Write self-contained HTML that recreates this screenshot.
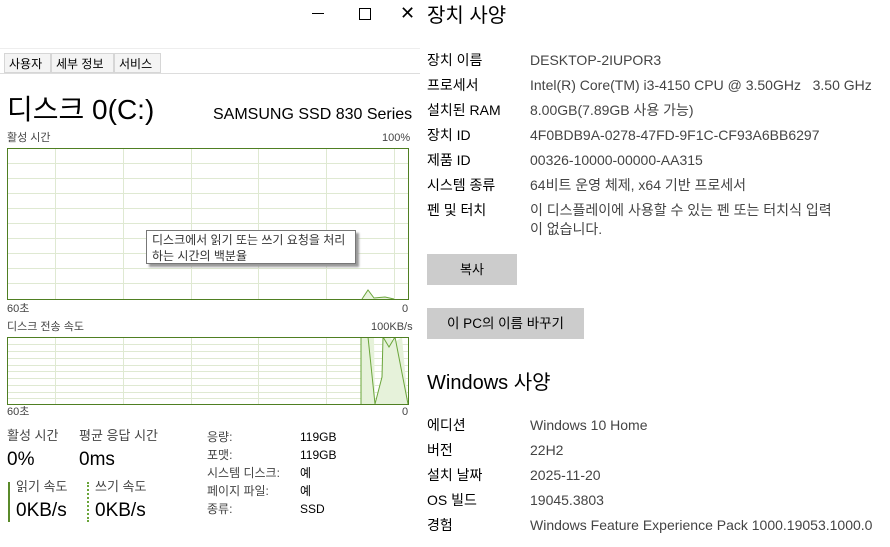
<!DOCTYPE html>
<html><head><meta charset="utf-8"><style>
body{margin:0;width:890px;height:547px;background:#fff;position:relative;overflow:hidden;font-family:"Liberation Sans","Noto Sans CJK KR",sans-serif;color:#000}
.a{position:absolute;white-space:nowrap}
.l{font-size:14px;line-height:18px}
.v{font-size:14px;line-height:18px;color:#444}
.s{font-size:11px;line-height:14px;color:#444}
.tab{position:absolute;top:53px;height:20px;border:1px solid #d6d6d6;background:#f4f4f4;font-size:12px;line-height:20px;padding:0 4px;box-sizing:border-box}
</style></head><body>
<div class="a" style="left:312px;top:13px;width:12px;height:1px;background:#000"></div>
<div class="a" style="left:359px;top:8px;width:10px;height:10px;border:1px solid #000"></div>
<div class="a" style="left:400px;top:1px;font-size:18px;line-height:24px">✕</div>
<div class="a" style="left:0;top:48px;width:420px;height:1px;background:#eee"></div>
<div class="a" style="left:0;top:73px;width:420px;height:1px;background:#ddd"></div>
<div class="tab" style="left:4px;width:47px">사용자</div>
<div class="tab" style="left:51px;width:63px">세부 정보</div>
<div class="tab" style="left:114px;width:47px">서비스</div>
<div class="a" style="left:7px;top:93px;font-size:28px;line-height:34px">디스크 0(C:)</div>
<div class="a" style="left:213px;top:104px;font-size:16px;line-height:22px">SAMSUNG SSD 830 Series</div>
<div class="a s" style="left:7px;top:131px">활성 시간</div>
<div class="a s" style="left:382px;top:131px">100%</div>
<svg class="a" style="left:7px;top:148px" width="402" height="152">
<g stroke="#dfe9d2" stroke-width="1">
<line x1="48.5" y1="0" x2="48.5" y2="152"/><line x1="116.5" y1="0" x2="116.5" y2="152"/><line x1="184.5" y1="0" x2="184.5" y2="152"/><line x1="251.5" y1="0" x2="251.5" y2="152"/><line x1="319.5" y1="0" x2="319.5" y2="152"/><line x1="387.5" y1="0" x2="387.5" y2="152"/>
<line x1="0" y1="15.5" x2="402" y2="15.5"/><line x1="0" y1="30.5" x2="402" y2="30.5"/><line x1="0" y1="45.5" x2="402" y2="45.5"/><line x1="0" y1="60.5" x2="402" y2="60.5"/><line x1="0" y1="75.5" x2="402" y2="75.5"/><line x1="0" y1="90.5" x2="402" y2="90.5"/><line x1="0" y1="105.5" x2="402" y2="105.5"/><line x1="0" y1="120.5" x2="402" y2="120.5"/><line x1="0" y1="135.5" x2="402" y2="135.5"/>
</g>
<polyline points="355,151 361,142 367,150 378,149 387,151" fill="#eaf4df" stroke="#6aa53a"/>
<rect x="0.5" y="0.5" width="401" height="151" fill="none" stroke="#4f7f22"/>
</svg>
<div class="a" style="left:146px;top:230px;width:210px;height:34px;border:1px solid #777;background:#fff;box-shadow:3px 3px 2px #999;font-size:12px;line-height:16px;padding:1px 5px;box-sizing:border-box;color:#333;white-space:normal">디스크에서 읽기 또는 쓰기 요청을 처리하는 시간의 백분율</div>
<div class="a s" style="left:7px;top:302px">60초</div>
<div class="a s" style="left:402px;top:302px">0</div>
<div class="a s" style="left:7px;top:320px">디스크 전송 속도</div>
<div class="a s" style="left:371px;top:320px">100KB/s</div>
<svg class="a" style="left:7px;top:337px" width="402" height="68">
<g stroke="#dfe9d2" stroke-width="1">
<line x1="48.5" y1="0" x2="48.5" y2="68"/><line x1="116.5" y1="0" x2="116.5" y2="68"/><line x1="184.5" y1="0" x2="184.5" y2="68"/><line x1="251.5" y1="0" x2="251.5" y2="68"/><line x1="319.5" y1="0" x2="319.5" y2="68"/><line x1="387.5" y1="0" x2="387.5" y2="68"/>
<line x1="0" y1="7.5" x2="402" y2="7.5"/><line x1="0" y1="14.5" x2="402" y2="14.5"/><line x1="0" y1="21.5" x2="402" y2="21.5"/><line x1="0" y1="28.5" x2="402" y2="28.5"/><line x1="0" y1="34.5" x2="402" y2="34.5"/><line x1="0" y1="41.5" x2="402" y2="41.5"/><line x1="0" y1="48.5" x2="402" y2="48.5"/><line x1="0" y1="55.5" x2="402" y2="55.5"/><line x1="0" y1="61.5" x2="402" y2="61.5"/>
</g>
<polygon points="354,67 354,0 367,0 368,67 375,40 376,0 382,0 388,5 395,0 401,67" fill="#e6f2da"/>
<polyline points="354,67 354,0 361,0 368,67 375,40 376,0 382,10 388,0 401,67" fill="none" stroke="#6aa53a"/>
<rect x="0.5" y="0.5" width="401" height="67" fill="none" stroke="#4f7f22"/>
</svg>
<div class="a s" style="left:7px;top:405px">60초</div>
<div class="a s" style="left:402px;top:405px">0</div>
<div class="a" style="left:7px;top:428px;font-size:13px;line-height:16px;color:#444">활성 시간</div>
<div class="a" style="left:79px;top:428px;font-size:13px;line-height:16px;color:#444">평균 응답 시간</div>
<div class="a" style="left:7px;top:449px;font-size:19px;line-height:22px">0%</div>
<div class="a" style="left:79px;top:449px;font-size:19px;line-height:22px">0ms</div>
<div class="a" style="left:8px;top:482px;width:2px;height:40px;background:#5a8a2a"></div>
<div class="a" style="left:87px;top:482px;width:0;height:40px;border-left:2px dotted #6aa53a"></div>
<div class="a" style="left:16px;top:479px;font-size:13px;line-height:16px;color:#444">읽기 속도</div>
<div class="a" style="left:95px;top:479px;font-size:13px;line-height:16px;color:#444">쓰기 속도</div>
<div class="a" style="left:16px;top:500px;font-size:19px;line-height:22px">0KB/s</div>
<div class="a" style="left:95px;top:500px;font-size:19px;line-height:22px">0KB/s</div>
<div class="a" style="left:207px;top:428px;font-size:12px;line-height:18px;color:#444">응량:<br>포맷:<br>시스템 디스크:<br>페이지 파일:<br>종류:</div>
<div class="a" style="left:300px;top:428px;font-size:12px;line-height:18px;color:#000">119GB<br>119GB<br>예<br>예<br>SSD</div>

<div class="a" style="left:427px;top:3px;font-size:20px;line-height:26px">장치 사양</div>
<div class="a l" style="left:427px;top:48px;line-height:25px">장치 이름<br>프로세서<br>설치된 RAM<br>장치 ID<br>제품 ID<br>시스템 종류<br>펜 및 터치</div>
<div class="a v" style="left:530px;top:48px;line-height:25px">DESKTOP-2IUPOR3<br>Intel(R) Core(TM) i3-4150 CPU @ 3.50GHz &nbsp;&nbsp;3.50 GHz<br>8.00GB(7.89GB 사용 가능)<br>4F0BDB9A-0278-47FD-9F1C-CF93A6BB6297<br>00326-10000-00000-AA315<br>64비트 운영 체제, x64 기반 프로세서<br>이 디스플레이에 사용할 수 있는 펜 또는 터치식 입력</div>
<div class="a v" style="left:530px;top:220px">이 없습니다.</div>
<div class="a" style="left:427px;top:254px;width:90px;height:31px;background:#ccc;font-size:13px;line-height:31px;text-align:center">복사</div>
<div class="a" style="left:427px;top:308px;width:157px;height:31px;background:#ccc;font-size:13.5px;line-height:31px;text-align:center">이 PC의 이름 바꾸기</div>
<div class="a" style="left:427px;top:370px;font-size:20px;line-height:26px">Windows 사양</div>
<div class="a l" style="left:427px;top:413px;line-height:25px">에디션<br>버전<br>설치 날짜<br>OS 빌드<br>경험</div>
<div class="a v" style="left:530px;top:413px;line-height:25px">Windows 10 Home<br>22H2<br>2025-11-20<br>19045.3803<br>Windows Feature Experience Pack 1000.19053.1000.0</div>
</body></html>
